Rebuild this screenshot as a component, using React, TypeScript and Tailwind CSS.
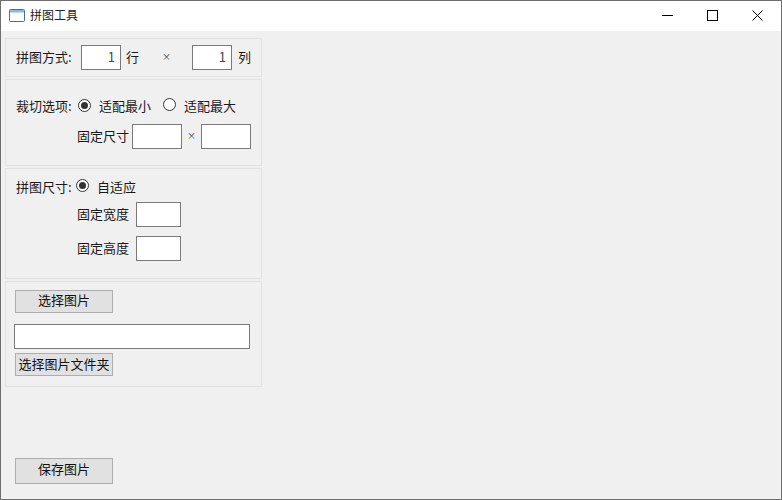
import React from 'react';

const FONT = "font-['Noto_Sans_CJK_SC','Noto_Sans',sans-serif]";

const Field = ({ value, className }: { value?: string; className: string }) => (
  <div className={`flex h-[25px] shrink-0 items-center justify-end border border-[#7a7a7a] bg-white pb-[2px] pr-[5px] text-[13px] text-[#444444] ${className}`}>
    {value}
  </div>
);

const Radio = ({ checked, className }: { checked?: boolean; className?: string }) => (
  <span className={`flex h-[13px] w-[13px] shrink-0 items-center justify-center rounded-full border border-[#333333] bg-white ${className ?? ''}`}>
    {checked && <span className="h-[7px] w-[7px] rounded-full bg-[#333333]" />}
  </span>
);

const Label = ({ text, className }: { text: string; className?: string }) => (
  <span className={`pb-[2px] text-[13px] ${className ?? ''}`}>{text}</span>
);

const Times = ({ className }: { className: string }) => (
  <span className={`pb-[1px] text-[9px] text-[#333333] ${className}`}>×</span>
);

const Btn = ({ label, className }: { label: string; className: string }) => (
  <button className={`flex w-[98px] items-center justify-center border border-[#adadad] bg-[#e1e1e1] text-[13px] text-[#111111] ${className}`}>
    {label}
  </button>
);

const Group = ({ className, children }: { className: string; children: React.ReactNode }) => (
  <div className={`w-[257px] border border-[#e2e2e2] ${className}`}>{children}</div>
);

export default function App() {
  return (
    <div className={`flex h-[500px] w-[782px] flex-col border border-[#6e6e6e] bg-[#f0f0f0] text-[#1a1a1a] ${FONT}`}>
      {/* title bar */}
      <div className="flex h-[30px] shrink-0 items-center bg-white">
        <svg width="16" height="13" viewBox="0 0 16 13" className="ml-[8px] mt-[-2px]">
          <rect x="0.5" y="0.5" width="15" height="12" rx="1" fill="#ffffff" stroke="#3f6fa8" />
          <rect x="1" y="1" width="14" height="2.5" fill="#8db8e4" />
        </svg>
        <span className="ml-[5px] pb-[2px] text-[12px] text-[#222222]">拼图工具</span>
        <div className="ml-auto mt-[-2px] flex items-center text-black">
          <svg width="11" height="11" viewBox="0 0 11 11" className="mr-[34px]">
            <path d="M0 5.5H11" stroke="currentColor" strokeWidth="1" />
          </svg>
          <svg width="11" height="11" viewBox="0 0 11 11" className="mr-[34px]">
            <rect x="0.5" y="0.5" width="10" height="10" fill="none" stroke="currentColor" strokeWidth="1" />
          </svg>
          <svg width="11" height="11" viewBox="0 0 11 11" className="mr-[18px]">
            <path d="M0.5 0.5L10.5 10.5M10.5 0.5L0.5 10.5" stroke="currentColor" strokeWidth="1" />
          </svg>
        </div>
      </div>

      <div className="flex flex-1 flex-col pl-[4px] pt-[7px]">
        <Group className="flex h-[39px] items-center pl-[10px]">
          <Label text="拼图方式:" className="w-[65px]" />
          <Field value="1" className="w-[40px]" />
          <Label text="行" className="ml-[5px]" />
          <Times className="ml-[23px]" />
          <Field value="1" className="ml-[21px] w-[40px]" />
          <Label text="列" className="ml-[6px]" />
        </Group>

        <Group className="mt-[2px] h-[87px] pl-[10px] pt-[17px]">
          <div className="flex h-[20px] items-center">
            <Label text="裁切选项:" className="w-[62px]" />
            <Radio checked className="mt-[-4px]" />
            <Label text="适配最小" className="ml-[8px]" />
            <Radio className="ml-[12px] mt-[-6px]" />
            <Label text="适配最大" className="ml-[8px]" />
          </div>
          <div className="mt-[7px] flex items-center pl-[61px]">
            <Label text="固定尺寸" className="w-[55px]" />
            <Field className="w-[50px]" />
            <Times className="ml-[5px]" />
            <Field className="ml-[5px] w-[50px]" />
          </div>
        </Group>

        <Group className="mt-[2px] h-[111px] pl-[10px] pt-[9px]">
          <div className="flex h-[20px] items-center">
            <Label text="拼图尺寸:" className="w-[60px]" />
            <Radio checked className="mt-[-6px]" />
            <Label text="自适应" className="ml-[8px]" />
          </div>
          <div className="mt-[4px] flex items-center pl-[61px]">
            <Label text="固定宽度" className="w-[59px]" />
            <Field className="w-[45px]" />
          </div>
          <div className="mt-[9px] flex items-center pl-[61px]">
            <Label text="固定高度" className="w-[59px]" />
            <Field className="w-[45px]" />
          </div>
        </Group>

        <Group className="mt-[2px] h-[106px] pl-[9px] pt-[8px]">
          <Btn label="选择图片" className="h-[23px] pb-[3px]" />
          <Field className="ml-[-1px] mt-[11px] w-[236px]" />
          <Btn label="选择图片文件夹" className="mt-[4px] h-[23px] pb-[2px]" />
        </Group>

        <Btn label="保存图片" className="ml-[10px] mt-[71px] h-[26px] pb-[4px]" />
      </div>
    </div>
  );
}
